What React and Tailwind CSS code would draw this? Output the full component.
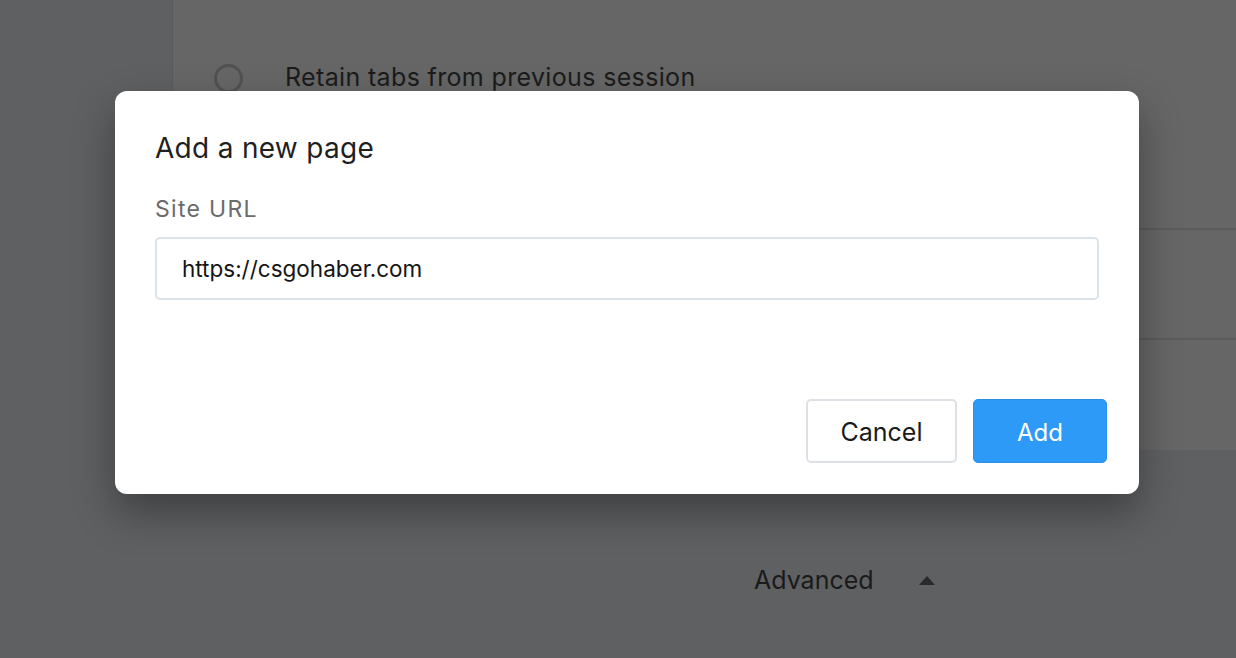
import React from 'react';

const App = () => {
    return (
        <div className="relative w-full h-[658px] overflow-hidden bg-[#5f6062] font-['Inter','Liberation_Sans',sans-serif]">
            {/* dimmed settings page behind the dialog */}
            <div className="flex h-full">
                <div className="w-[172px] shrink-0 bg-[#5f6062]"></div>
                <div className="flex-1 flex flex-col">
                    <div className="bg-[#666666] border-l border-[#5a5a5a]">
                        <div className="h-[230px] border-b-2 border-[#5b5b5b] pl-[41px] pt-[61px]">
                            <div className="flex items-center gap-[42px]">
                                <span className="w-[29px] h-[29px] rounded-full border-[3px] border-[#525252]"></span>
                                <span className="text-[25px] text-[#1b1b1b] tracking-[0.35px] -mt-[2px]">Retain tabs from previous session</span>
                            </div>
                        </div>
                        <div className="h-[110px] border-b-2 border-[#5b5b5b]"></div>
                        <div className="h-[110px]"></div>
                    </div>
                    <div className="flex items-center pl-[582px] pt-[112px]">
                        <span className="text-[25px] text-[#1a1a1a]">Advanced</span>
                        <svg className="ml-[45px]" width="16" height="9" viewBox="0 0 16 9">
                            <path d="M8 0 L16 9 L0 9 Z" fill="#2a2a2a" />
                        </svg>
                    </div>
                </div>
            </div>

            {/* dialog */}
            <div className="absolute left-[115px] top-[91px] w-[1024px] h-[403px] bg-white rounded-[12px] shadow-[0_18px_40px_rgba(0,0,0,0.35)]">
                <div className="absolute left-[40px] top-[36px] text-[28px] text-[#1f1f1f] tracking-[0.3px]">Add a new page</div>
                <div className="absolute left-[40px] top-[101px] text-[23px] text-[#6b6b6b] tracking-[1.3px]">Site URL</div>
                <div className="absolute left-[40px] top-[146px] w-[944px] h-[63px] border-2 border-[#dbe3ea] rounded-[5px] flex items-center pl-[25px]">
                    <span className="text-[22.5px] text-[#151515]">https://csgohaber.com</span>
                </div>
                <div className="absolute right-[32px] bottom-[31px] flex gap-[16px]">
                    <button className="w-[151px] h-[64px] pt-[3px] border-2 border-[#dde1e6] rounded-[5px] bg-white text-[25px] text-[#1a1a1a]">Cancel</button>
                    <button className="w-[134px] h-[64px] pt-[3px] rounded-[5px] bg-[#2d9af7] border border-[#2a8fe6] text-[24px] text-white">Add</button>
                </div>
            </div>
        </div>
    );
};

export default App;
